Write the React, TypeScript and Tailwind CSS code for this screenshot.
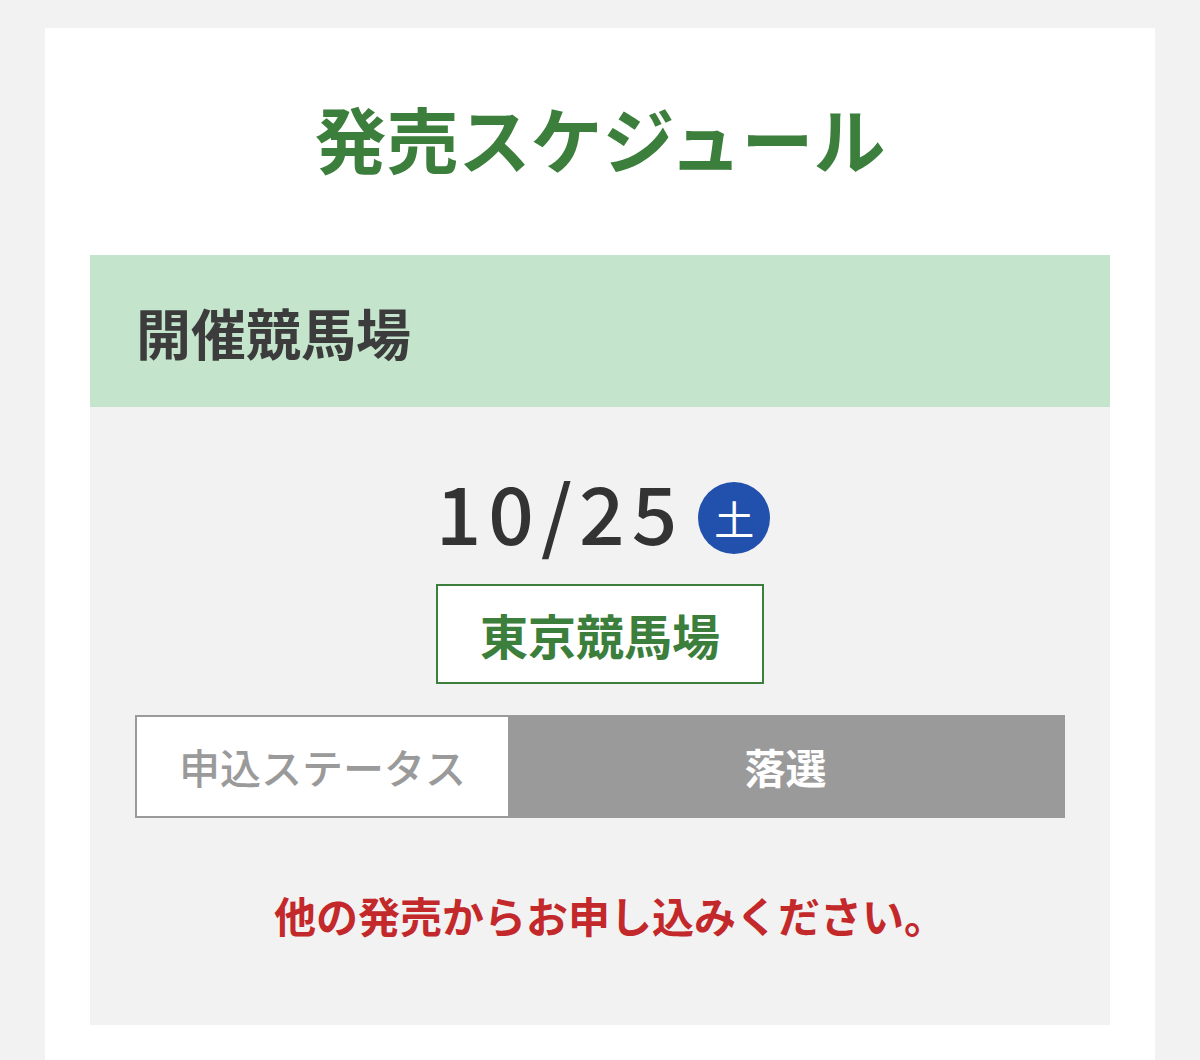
import React from 'react';

const jp = '"Noto Sans CJK JP", "Noto Sans", sans-serif';

function App() {
  return (
    <div className="min-h-screen bg-[#f2f2f2] pt-[28px] px-[45px]" style={{ fontFamily: jp }}>
      <div className="bg-white px-[45px] pb-[60px]">
        <h1 className="h-[227px] flex items-center justify-center pb-[10px] text-[72px] leading-none font-bold text-[#3c7e3c]">
          発売スケジュール
        </h1>
        <div className="bg-[#c4e4cc] h-[152px] flex items-center pl-[46px] text-[55px] leading-none font-bold text-[#3c3c3c]">
          開催競馬場
        </div>
        <div className="bg-[#f2f2f2] px-[45px] pt-[63px] pb-[80px] flex flex-col items-center">
          <div className="h-[80px] flex items-center gap-[14px] pl-[6px]">
            <span className="text-[80px] leading-none font-medium text-[#333333] tracking-[7px]">10/25</span>
            <span className="mt-[16px] w-[72px] h-[72px] rounded-full bg-[#2150ad] text-white text-[40px] leading-none flex items-center justify-center">
              土
            </span>
          </div>
          <div className="mt-[34px] w-[328px] h-[100px] border-2 border-[#3c7e3c] bg-white flex items-center justify-center text-[48px] leading-none font-bold text-[#3c7e3c]">
            東京競馬場
          </div>
          <div className="mt-[31px] w-full h-[103px] border-2 border-[#9a9a9a] flex">
            <div className="w-[371px] bg-white flex items-center justify-center text-[41px] leading-none font-medium text-[#9a9a9a]">
              申込ステータス
            </div>
            <div className="flex-1 bg-[#9a9a9a] flex items-center justify-center text-[41px] leading-none font-bold text-white">
              落選
            </div>
          </div>
          <div className="mt-[67px] h-[60px] pl-[20px] flex items-center justify-center text-[42px] leading-none font-bold text-[#c3282b]">
            他の発売からお申し込みください。
          </div>
        </div>
      </div>
    </div>
  );
}

export default App;
